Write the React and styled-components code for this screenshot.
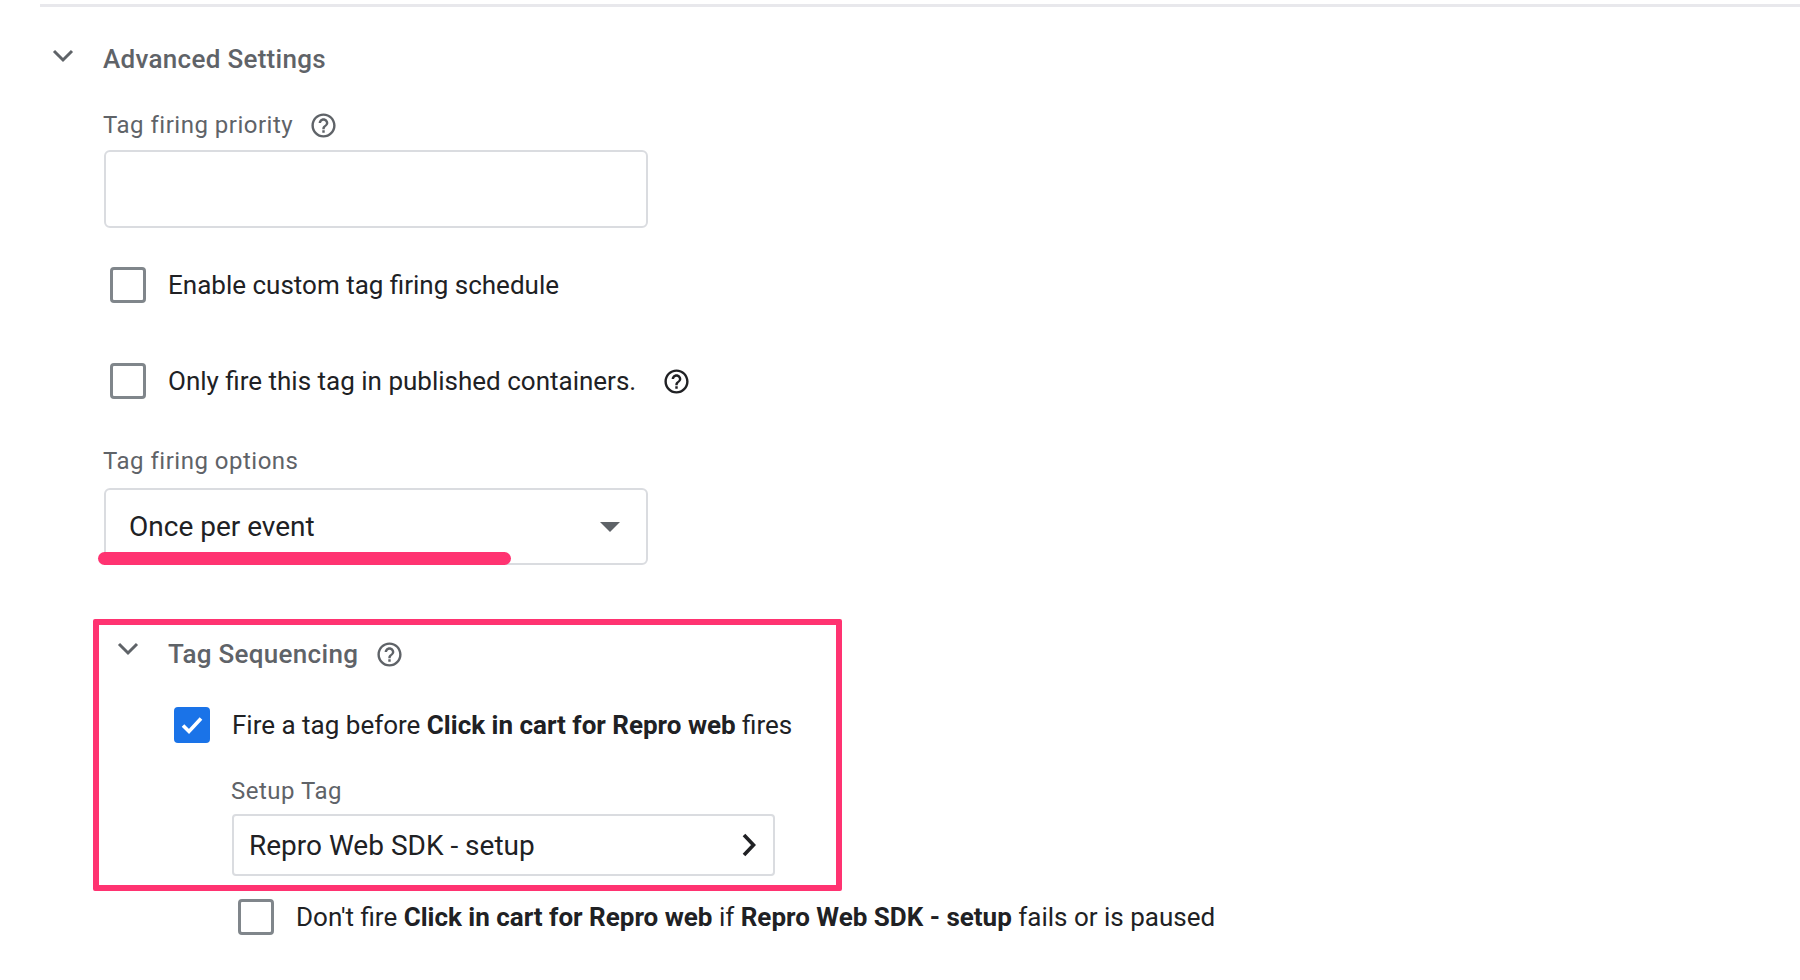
import styled, { createGlobalStyle } from "styled-components"

const GlobalStyle = createGlobalStyle`
  * { box-sizing: border-box; }
  body {
    margin: 0;
    background: #ffffff;
    font-family: Roboto, "Liberation Sans", Arial, sans-serif;
    color: #202124;
  }
`

const pink = "#ff3371"

function HelpIcon({ dark }) {
    return (
        <HelpWrap dark={dark}>
            <svg width="29" height="29" viewBox="0 0 24 24" fill="currentColor">
                <path d="M11 18h2v-2h-2v2zm1-16C6.48 2 2 6.48 2 12s4.48 10 10 10 10-4.48 10-10S17.52 2 12 2zm0 18c-4.41 0-8-3.59-8-8s3.59-8 8-8 8 3.59 8 8-3.59 8-8 8zm0-14c-2.21 0-4 1.79-4 4h2c0-1.1.9-2 2-2s2 .9 2 2c0 2-3 1.75-3 5h2c0-2.25 3-2.5 3-5 0-2.21-1.79-4-4-4z" />
            </svg>
        </HelpWrap>
    )
}

function ChevronDown() {
    return (
        <svg width="22" height="14" viewBox="0 0 22 14">
            <polyline points="2,2 11,11 20,2" fill="none" stroke="#5f6368" strokeWidth="3" />
        </svg>
    )
}

function Checkbox({ checked }) {
    return (
        <Box checked={checked}>
            {checked && (
                <svg width="30" height="30" viewBox="0 0 30 30">
                    <polyline points="6,15.5 12,21.5 24,8.5" fill="none" stroke="#ffffff" strokeWidth="3.6" />
                </svg>
            )}
        </Box>
    )
}

export default function App() {
    return (
        <>
            <GlobalStyle />
            <Page>
                <Divider />

                <SectionHeader>
                    <Toggle><ChevronDown /></Toggle>
                    <SectionTitle>Advanced Settings</SectionTitle>
                </SectionHeader>

                <SectionBody>
                    <FieldLabel top={31}>
                        Tag firing priority
                        <HelpIcon />
                    </FieldLabel>
                    <TextField />

                    <CheckRow top={32} indent={7}>
                        <Checkbox />
                        <CheckText>Enable custom tag firing schedule</CheckText>
                    </CheckRow>

                    <CheckRow top={46} indent={7}>
                        <Checkbox />
                        <CheckText>Only fire this tag in published containers.</CheckText>
                        <HelpGap><HelpIcon dark /></HelpGap>
                    </CheckRow>

                    <FieldLabel top={40}>Tag firing options</FieldLabel>
                    <SelectField>
                        <span>Once per event</span>
                        <svg width="20" height="10" viewBox="0 0 20 10">
                            <polygon points="0,0 20,0 10,10" fill="#5f6368" />
                        </svg>
                        <Highlight />
                    </SelectField>

                    <SequenceBox>
                        <SequenceHeader>
                            <SmallToggle><ChevronDown /></SmallToggle>
                            <SequenceTitle>Tag Sequencing</SequenceTitle>
                            <HelpIcon />
                        </SequenceHeader>

                        <CheckRow top={26} indent={75}>
                            <Checkbox checked />
                            <CheckText>Fire a tag before <b>Click in cart for Repro web</b> fires</CheckText>
                        </CheckRow>

                        <FieldLabel top={26} indent={132}>Setup Tag</FieldLabel>
                        <PickerField>
                            <span>Repro Web SDK - setup</span>
                            <svg width="16" height="24" viewBox="0 0 16 24">
                                <polyline points="3,2 12.5,12 3,22" fill="none" stroke="#202124" strokeWidth="3.6" />
                            </svg>
                        </PickerField>
                    </SequenceBox>

                    <CheckRow top={1} indent={135}>
                        <Checkbox />
                        <CheckText>
                            Don't fire <b>Click in cart for Repro web</b> if <b>Repro Web SDK - setup</b> fails or is paused
                        </CheckText>
                    </CheckRow>
                </SectionBody>
            </Page>
        </>
    )
}

const Page = styled.div`
    padding: 4px 0 0 40px;
    min-height: 980px;
`

const Divider = styled.div`
    height: 3px;
    background: #e8e8ec;
`

const SectionHeader = styled.div`
    display: flex;
    align-items: center;
    height: 40px;
    margin-top: 32px;
`

const Toggle = styled.div`
    width: 63px;
    padding-left: 12px;
    display: flex;
    margin-top: -6px;
`

const SectionTitle = styled.div`
    font-size: 26px;
    font-weight: 500;
    color: #5f6368;
    letter-spacing: 0.3px;
`

const SectionBody = styled.div`
    padding-left: 63px;
    display: flex;
    flex-direction: column;
    align-items: flex-start;
`

const FieldLabel = styled.div`
    display: flex;
    align-items: center;
    gap: 16px;
    height: 30px;
    margin-top: ${p => p.top || 0}px;
    margin-left: ${p => p.indent || 0}px;
    font-size: 24px;
    letter-spacing: 0.5px;
    color: #5f6368;
`

const HelpWrap = styled.span`
    display: inline-flex;
    color: ${p => p.dark ? "#202124" : "#5f6368"};
`

const HelpGap = styled.span`
    display: inline-flex;
    margin-left: 26px;
`

const TextField = styled.div`
    margin-top: 10px;
    margin-left: 1px;
    width: 544px;
    height: 78px;
    border: 2px solid #dadce0;
    border-radius: 6px;
`

const CheckRow = styled.div`
    display: flex;
    align-items: center;
    height: 50px;
    margin-top: ${p => p.top || 0}px;
    margin-left: ${p => p.indent || 0}px;
`

const Box = styled.div`
    width: 36px;
    height: 36px;
    flex-shrink: 0;
    border-radius: 4px;
    border: ${p => p.checked ? "none" : "3px solid #80868b"};
    background: ${p => p.checked ? "#1a73e8" : "#ffffff"};
    display: flex;
    align-items: center;
    justify-content: center;
    margin-right: 22px;
`

const CheckText = styled.div`
    font-size: 26px;
    color: #202124;
    white-space: nowrap;
    b { font-weight: 700; }
`

const SelectField = styled.div`
    position: relative;
    margin-top: 12px;
    margin-left: 1px;
    width: 544px;
    height: 77px;
    border: 2px solid #dadce0;
    border-radius: 6px;
    display: flex;
    align-items: center;
    justify-content: space-between;
    padding: 0 26px 0 23px;
    font-size: 28px;
    color: #202124;
`

const Highlight = styled.div`
    position: absolute;
    left: -8px;
    top: 62px;
    width: 413px;
    height: 13px;
    border-radius: 7px;
    background: ${pink};
`

const SequenceBox = styled.div`
    margin-top: 54px;
    margin-left: -10px;
    width: 749px;
    height: 272px;
    border: 6px solid ${pink};
    border-radius: 2px;
    display: flex;
    flex-direction: column;
    align-items: flex-start;
`

const SequenceHeader = styled.div`
    display: flex;
    align-items: center;
    height: 40px;
    margin-top: 9px;
`

const SmallToggle = styled.div`
    width: 69px;
    padding-left: 18px;
    display: flex;
    margin-top: -10px;
`

const SequenceTitle = styled.div`
    font-size: 26px;
    font-weight: 500;
    color: #5f6368;
    letter-spacing: 0.3px;
    margin-right: 17px;
`

const PickerField = styled.div`
    margin-top: 8px;
    margin-left: 133px;
    width: 543px;
    height: 62px;
    border: 2px solid #dadce0;
    border-radius: 4px;
    display: flex;
    align-items: center;
    justify-content: space-between;
    padding: 0 16px 0 15px;
    font-size: 28px;
    color: #202124;
`
